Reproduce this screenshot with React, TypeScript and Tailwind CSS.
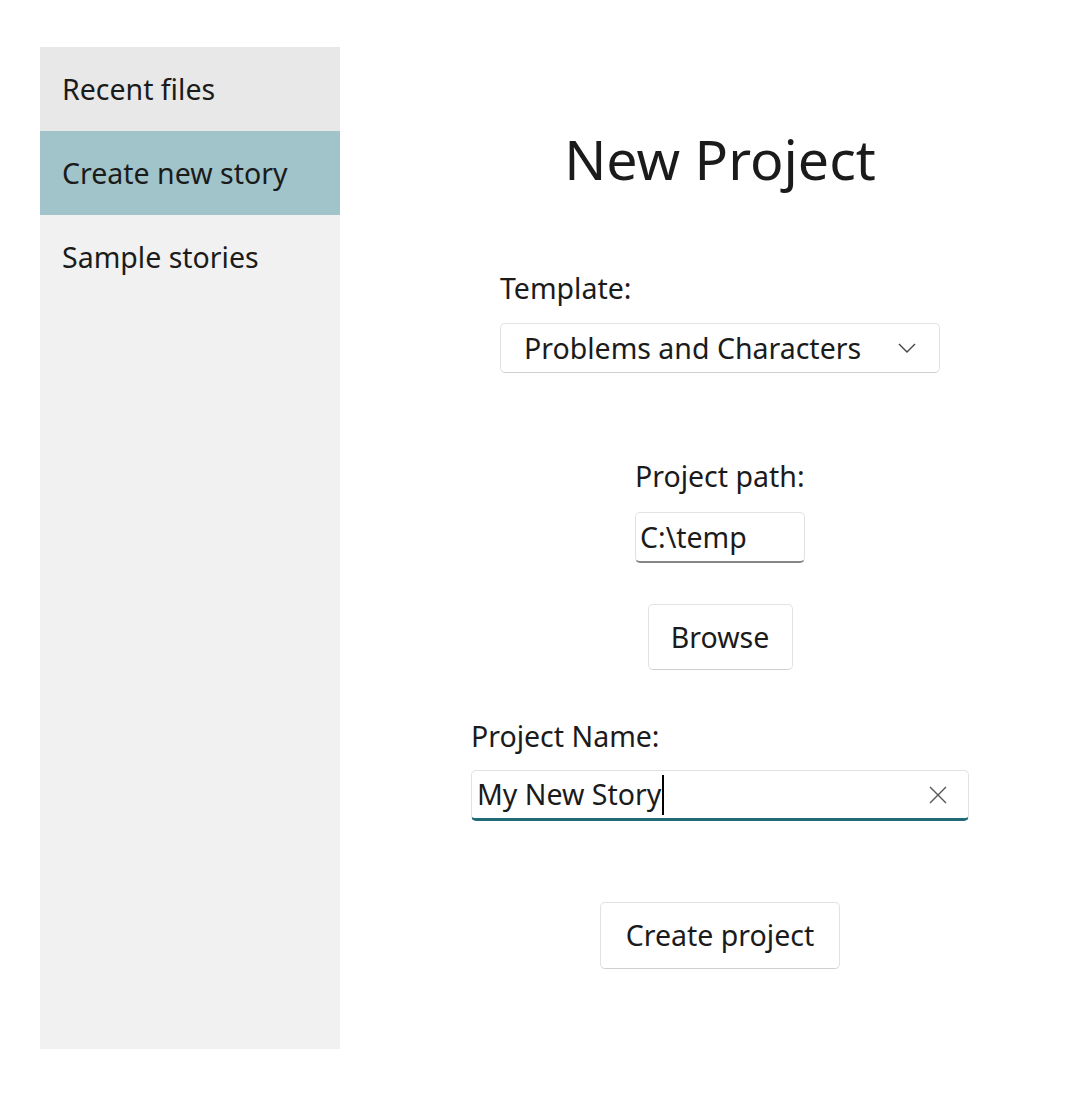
import React from 'react';

const font = { fontFamily: '"Noto Sans", "Open Sans", sans-serif' };

function Chevron() {
  return (
    <svg width="20" height="20" viewBox="0 0 20 20" className="text-[#444]">
      <path d="M2 6 L10 14 L18 6" fill="none" stroke="currentColor" strokeWidth="1.4" />
    </svg>
  );
}

function Cross() {
  return (
    <svg width="20" height="20" viewBox="0 0 20 20" className="text-[#555]">
      <path d="M2 2 L18 18 M18 2 L2 18" fill="none" stroke="currentColor" strokeWidth="1.4" />
    </svg>
  );
}

export default function App() {
  return (
    <div className="flex w-[1081px] h-[1095px] bg-white text-[#1b1b1b] overflow-hidden" style={font}>
      {/* Sidebar */}
      <div className="ml-[40px] mt-[47px] w-[300px] h-[1002px] bg-[#f1f1f1] flex flex-col text-[28.5px]">
        <div className="h-[84px] bg-[#e8e8e8] flex items-center pl-[22px]">Recent files</div>
        <div className="h-[84px] bg-[#a0c4ca] flex items-center pl-[22px]">Create new story</div>
        <div className="h-[84px] flex items-center pl-[22px]">Sample stories</div>
      </div>

      {/* Main */}
      <div className="flex-1 pl-[19px] flex flex-col items-center text-[28.5px]">
        <h1 className="mt-[122px] text-[55.5px] leading-[74px]">New Project</h1>

        <div className="mt-[74px] flex flex-col">
          <span className="leading-[36px]">Template:</span>
          <div className="mt-[17px] w-[440px] h-[50px] rounded-[5px] border border-[#e2e2e2] border-b-[#cfcfcf] bg-white flex items-center pl-[23px] pr-[22px] justify-between">
            <span>Problems and Characters</span>
            <Chevron />
          </div>
        </div>

        <div className="mt-[85px] flex flex-col">
          <span className="leading-[36px]">Project path:</span>
          <div className="mt-[18px] w-[170px] h-[51px] rounded-[5px] border border-[#e2e2e2] border-b-2 border-b-[#868686] bg-white flex items-center pl-[4px]">
            C:\temp
          </div>
        </div>

        <button className="mt-[41px] w-[145px] h-[66px] rounded-[5px] border border-[#e2e2e2] border-b-[#cfcfcf] bg-white">
          Browse
        </button>

        <div className="mt-[48px] flex flex-col">
          <span className="leading-[36px]">Project Name:</span>
          <div className="mt-[16px] w-[498px] h-[51px] rounded-[5px] border border-[#e2e2e2] border-b-[3px] border-b-[#226a77] bg-white flex items-center justify-between pl-[5px] pr-[20px]">
            <span className="flex items-center">
              My New Story
              <span className="inline-block w-[2px] h-[40px] bg-black ml-[1px]" />
            </span>
            <Cross />
          </div>
        </div>

        <button className="mt-[81px] w-[240px] h-[67px] rounded-[5px] border border-[#e2e2e2] border-b-[#cfcfcf] bg-white">
          Create project
        </button>
      </div>
    </div>
  );
}
